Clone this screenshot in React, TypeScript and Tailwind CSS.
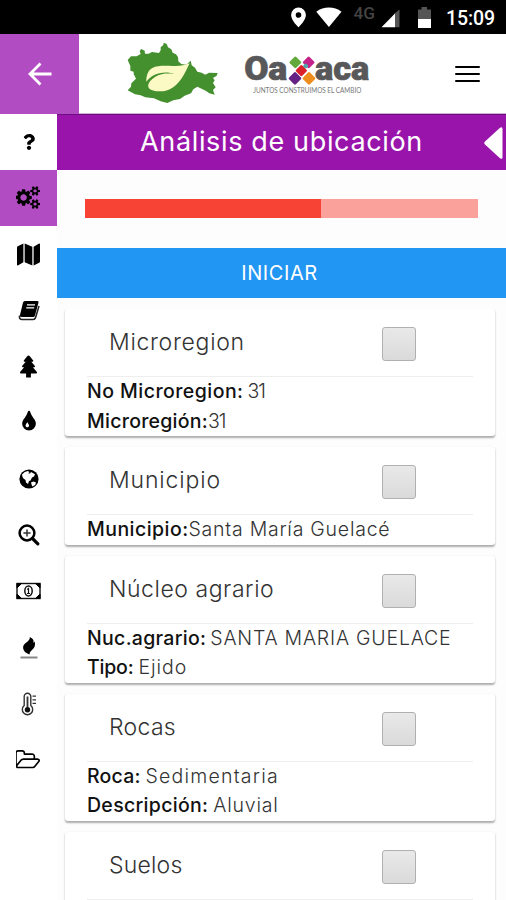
import type { ReactNode } from "react";
import { FaMap, FaQuestion } from "react-icons/fa";

const COGS =
  "M832 896q0-106-75-181t-181-75-181 75-75 181 75 181 181 75 181-75 75-181zm768 512q0-52-38-90t-90-38-90 38-38 90q0 53 37.5 90.5t90.5 37.5 90.5-37.5 37.5-90.5zm0-1024q0-52-38-90t-90-38-90 38-38 90q0 53 37.5 90.5t90.5 37.5 90.5-37.5 37.5-90.5zm-384 421v185q0 10-7 19.5t-16 10.5l-155 24q-11 35-32 76 34 48 90 115 7 11 7 20 0 12-7 19-23 30-82.5 89.5t-78.5 59.5q-11 0-21-7l-115-90q-37 19-77 31-11 108-23 155-7 24-30 24h-186q-11 0-20-7.5t-10-17.5l-23-153q-34-10-75-31l-118 89q-7 7-20 7-11 0-21-8-144-133-144-160 0-9 7-19 10-14 41-53t47-61q-23-44-35-82l-152-24q-10-1-17-9.5t-7-19.5v-185q0-10 7-19.5t16-10.5l155-24q11-35 32-76-34-48-90-115-7-11-7-20 0-12 7-20 22-30 82-89t79-59q11 0 21 7l115 90q34-18 77-32 11-108 23-154 7-24 30-24h186q11 0 20 7.5t10 17.5l23 153q34 10 75 31l118-89q8-7 20-7 11 0 21 8 144 133 144 160 0 8-7 19-12 16-42 54t-45 60q23 48 34 82l152 23q10 2 17 10.5t7 19.5zm640 533v140q0 16-149 31-12 27-30 52 51 113 51 138 0 4-4 7-122 71-124 71-8 0-46-47t-52-68q-20 2-30 2t-30-2q-14 21-52 68t-46 47q-2 0-124-71-4-3-4-7 0-25 51-138-18-25-30-52-149-15-149-31v-140q0-16 149-31 13-29 30-52-51-113-51-138 0-4 4-7 4-2 35-20t59-34 30-16q8 0 46 46.5t52 67.5q20-2 30-2t30 2q51-71 92-112l6-2q4 0 124 70 4 3 4 7 0 25-51 138 17 23 30 52 149 15 149 31zm0-1024v140q0 16-149 31-12 27-30 52 51 113 51 138 0 4-4 7-122 71-124 71-8 0-46-47t-52-68q-20 2-30 2t-30-2q-14 21-52 68t-46 47q-2 0-124-71-4-3-4-7 0-25 51-138-18-25-30-52-149-15-149-31v-140q0-16 149-31 13-29 30-52-51-113-51-138 0-4 4-7 4-2 35-20t59-34 30-16q8 0 46 46.5t52 67.5q20-2 30-2t30 2q51-71 92-112l6-2q4 0 124 70 4 3 4 7 0 25-51 138 17 23 30 52 149 15 149 31z";

const DROP =
  "M896 1152q0-36-20-69-1-1-15.5-22.5t-25.5-38-25-44-21-50.5q-4-16-21-16t-21 16q-7 23-21 50.5t-25 44-25.5 38-15.5 22.5q-20 33-20 69 0 53 37.5 90.5t90.5 37.5 90.5-37.5 37.5-90.5zm512-128q0 212-150 362t-362 150-362-150-150-362q0-145 81-275 6-9 62.5-90.5t101-151 99.5-178 83-201.5q9-30 34-47t51-17 51.5 17 33.5 47q28 93 83 201.5t99.5 178 101 151 62.5 90.5q81 127 81 275z";

const FOLDER =
  "M1717 931q0-35-53-35h-1088q-40 0-85.5 21.5t-71.5 52.5l-294 363q-18 24-18 40 0 35 53 35h1088q40 0 86-22t71-53l294-363q18-22 18-39zm-1141-163h768v-160q0-40-28-68t-68-28h-576q-40 0-68-28t-28-68v-64q0-40-28-68t-68-28h-320q-40 0-68 28t-28 68v853l256-315q44-53 116-87.5t140-34.5zm1269 163q0 62-46 120l-295 363q-43 53-116 87.5t-140 34.5h-1088q-92 0-158-66t-66-158v-960q0-92 66-158t158-66h320q92 0 158 66t66 158v32h544q92 0 158 66t66 158v160h192q54 0 99 24.5t67 70.5q15 32 15 68z";

function Glyph({ d, box, className }: { d: string; box: string; className: string }) {
  return (
    <svg viewBox={box} className={className} fill="currentColor" aria-hidden>
      <path d={d} />
    </svg>
  );
}

function BookIcon() {
  return (
    <svg viewBox="0 0 22 22" className="mb-0.5 size-[22px]" aria-hidden>
      <path d="M7 2h12.500q1.500 0 1 1.500L17 16.500q-.4 1.500-2 1.500H3.500q-2 0-1.500-2L5 3.500Q5.500 2 7 2z" fill="#000" />
      <path d="M9 5.800h8M8.200 8.800h8" stroke="#fff" strokeWidth="1.300" />
      <path d="M1.500 16.500q-.5 4 2.500 4h11q2 0 2.600-2L21 7" fill="none" stroke="#222" strokeWidth="1.500" />
    </svg>
  );
}

function TreeIcon() {
  return (
    <svg viewBox="0 0 19 23" className="h-[23px] w-[19px]" aria-hidden>
      <path
        d="M9.500.5q.8 0 1.300.8l3.400 4.200q.5 1-.6 1.200h-1.300l3.600 4.300q.6 1-.6 1.300h-1.400l4 4.600q.7 1.300-.8 1.500h-5.200V22.500H7.100v-4.100H1.900q-1.500-.2-.8-1.500l4-4.600H3.700q-1.200-.3-.6-1.300l3.600-4.300H5.400q-1.100-.2-.6-1.200l3.400-4.200q.5-.8 1.300-.8z"
        fill="#000"
      />
    </svg>
  );
}

function GlobeIcon() {
  return (
    <svg viewBox="0 0 20 20" className="size-5" aria-hidden>
      <circle cx="10" cy="10" r="9.600" fill="#000" />
      <path
        d="M3 5.500Q5.500 2.300 9 2l1.500 1.200-1.500 1 2 .3 1-1.500 4 2.300-1 2.200-2 1-1.500 3-1.500.5-1 3-2-1.500-.5-2.500-2-1.500L3.500 8z"
        fill="#fff"
      />
      <path d="M12 13.500l2.500-1 2.500 1-.8 2.500-3 1.500z" fill="#fff" />
    </svg>
  );
}

function ZoomIcon() {
  return (
    <svg viewBox="0 0 22 22" className="size-[22px]" fill="none" stroke="currentColor" aria-hidden>
      <circle cx="9" cy="9" r="7.4" strokeWidth="2.5" />
      <path d="M14.5 14.5l5.3 5.3" strokeWidth="3.2" strokeLinecap="round" />
      <path d="M9 5.4v7.200M5.400 9h7.200" strokeWidth="1.500" stroke="#333" />
    </svg>
  );
}

function MoneyIcon() {
  return (
    <svg viewBox="0 0 25 18" className="mb-0.5 h-[18px] w-[25px]" aria-hidden>
      <rect x="1" y="1.500" width="23" height="15" fill="#fff" stroke="#111" strokeWidth="1.400" />
      <path d="M1 1.500h4.500L1 6zM24 1.500h-4.500L24 6zM1 16.500h4.500L1 12zM24 16.500h-4.500L24 12z" fill="#000" stroke="#000" />
      <ellipse cx="12.500" cy="9" rx="3.700" ry="4.900" fill="#fff" stroke="#111" strokeWidth="1.500" />
      <path d="M11.200 7.400l1.300-1v5M11 11.500h3" fill="none" stroke="#111" strokeWidth="1.200" />
    </svg>
  );
}

function FireIcon() {
  return (
    <svg viewBox="0 0 20 24" className="h-6 w-5" aria-hidden>
      <path
        d="M10.500 18.500C6 16.800 3.600 14 4.200 10.500 4.900 6.800 11.400 5.400 10.800 1c3.200 1.400 4.300 3.400 3.600 5.700.6-.1 1-.5 1.300-1.100 1 4.500-.6 6.600-2.700 8.400-1.400 1.200-2.500 2.500-2.500 4.500z"
        fill="#000"
      />
      <path d="M1.500 21.500h17" stroke="#888" strokeWidth="2" />
    </svg>
  );
}

function ThermometerIcon() {
  return (
    <svg viewBox="0 0 18 24" className="h-6 w-[18px]" fill="none" stroke="#333" aria-hidden>
      <path d="M4.2 13.500V4.500a3.300 3.300 0 0 1 6.600 0v9a5.200 5.200 0 1 1-6.600 0z" strokeWidth="1.4" />
      <path d="M7.500 4.500v13" strokeWidth="1.800" />
      <circle cx="7.500" cy="17.800" r="2.700" fill="#111" stroke="none" />
      <path d="M12.500 4.200H16M12.500 7.800H16M12.500 11.400H16" strokeWidth="1.300" />
    </svg>
  );
}

const TOOLS: { name: string; icon: ReactNode }[] = [
  { name: "Ayuda", icon: <FaQuestion className="size-4" /> },
  { name: "Análisis", icon: <Glyph d={COGS} box="0 0 1920 1792" className="mb-0.5 h-[23px] w-[25px]" /> },
  { name: "Mapa", icon: <FaMap className="h-[25px] w-[23px]" preserveAspectRatio="none" /> },
  { name: "Catálogo", icon: <BookIcon /> },
  { name: "Vegetación", icon: <TreeIcon /> },
  { name: "Agua", icon: <Glyph d={DROP} box="0 0 1792 1792" className="mb-0.5 size-6" /> },
  { name: "Región", icon: <GlobeIcon /> },
  { name: "Buscar", icon: <ZoomIcon /> },
  { name: "Economía", icon: <MoneyIcon /> },
  { name: "Incendios", icon: <FireIcon /> },
  { name: "Clima", icon: <ThermometerIcon /> },
  { name: "Archivos", icon: <Glyph d={FOLDER} box="0 0 1920 1792" className="h-[24px] w-[25px]" /> },
];

type Field = { label: string; value: string; labelClass: string; valueClass: string };
type Section = { title: string; titleClass: string; fields: Field[] };

const SECTIONS: Section[] = [
  {
    title: "Microregion",
    titleClass: "tracking-[0.7px]",
    fields: [
      { label: "No Microregion:", value: "31", labelClass: "tracking-[0.45px]", valueClass: "ml-1 tracking-[-1px]" },
      { label: "Microregión:", value: "31", labelClass: "tracking-[0.25px]", valueClass: "tracking-[-1px]" },
    ],
  },
  {
    title: "Municipio",
    titleClass: "tracking-[0.85px]",
    fields: [
      { label: "Municipio:", value: "Santa María Guelacé", labelClass: "tracking-[0.45px]", valueClass: "tracking-[0.75px]" },
    ],
  },
  {
    title: "Núcleo agrario",
    titleClass: "tracking-[0.55px]",
    fields: [
      { label: "Nuc.agrario:", value: "SANTA MARIA GUELACE", labelClass: "tracking-[0.3px]", valueClass: "ml-1 tracking-[0.78px]" },
      { label: "Tipo:", value: "Ejido", labelClass: "tracking-[-0.2px]", valueClass: "ml-[5px] tracking-[1px]" },
    ],
  },
  {
    title: "Rocas",
    titleClass: "tracking-[0.3px]",
    fields: [
      { label: "Roca:", value: "Sedimentaria", labelClass: "tracking-[0.2px]", valueClass: "ml-[5px] tracking-[1.2px]" },
      { label: "Descripción:", value: "Aluvial", labelClass: "tracking-[0.3px]", valueClass: "ml-[5px] tracking-[0.8px]" },
    ],
  },
  {
    title: "Suelos",
    titleClass: "tracking-[0.2px]",
    fields: [],
  },
];

function StatusBar() {
  return (
    <div className="flex h-[34px] shrink-0 items-center bg-black pl-[290px] text-white">
      <svg viewBox="0 0 156 34" className="h-[34px] w-[156px]" aria-hidden>
        <path
          fillRule="evenodd"
          d="M8.5 7.5a7.4 7.4 0 0 0-7.4 7.4c0 5.3 7.4 12.3 7.4 12.3s7.4-7 7.4-12.3a7.4 7.4 0 0 0-7.4-7.4zm0 4.7a2.8 2.8 0 1 1 0 5.6 2.8 2.8 0 0 1 0-5.600z"
          fill="#fff"
        />
        <path d="M26.3 11.7c7.4-5.6 17.8-5.6 25.2 0L38.9 27z" fill="#fff" />
        <text x="63.5" y="19.2" className="font-['Roboto'] text-[17px] font-medium" fill="#444" textLength="21.5" lengthAdjust="spacingAndGlyphs">
          4G
        </text>
        <path d="M104.500 13.500L109.500 9.500V27.300h-5z" fill="#555" />
        <path d="M91.5 27.3L105 13.500v13.800z" fill="#fff" />
        <path d="M131.500 7h5.500v2.500h4V19h-13V9.500h3.500z" fill="#555" />
        <path d="M128 19h13v9h-13z" fill="#fff" />
      </svg>
      <span className="mt-1 font-['Roboto'] text-[19.5px] leading-none font-medium tracking-[-0.1px]">15:09</span>
    </div>
  );
}

function StateMap() {
  return (
    <svg viewBox="0 0 318 228" className="ml-[41px] h-[76px] w-[106px] shrink-0" aria-hidden>
      <path
        d="M23 72L33 61 50 61 62 54 59 45 64 39 74 44 75 53 86 53 96 48 117 51 122 43 122 34 130 27 131 20 140 24 144 34 154 40 158 50 168 55 174 63 175 76 184 84 199 86 212 74 215 88 225 95 232 107 245 110 256 116 267 110 293 111 290 119 279 126 284 133 279 141 287 154 279 162 284 176 268 172 257 164 240 156 232 152 220 160 213 172 194 179 180 189 160 193 142 201 122 196 102 187 76 184 62 178 45 175 23 163 33 152 34 142 48 128 41 114 41 107 31 104 31 90z"
        fill="#45902e"
      />
      <path
        d="M79 137c-1-17 5-34 18-41 16-8 38-7 60-6 22 1 35-1 52-8-9 18-15 33-25 46-16 23-38 38-62 38-17 0-31-3-36-11-3-7-1-12 4-19 8-10 22-19 38-22 13-2 24-1 34 0-12-5-28-6-44-2-18 4-31 14-39 25z"
        fill="#fbf9c4"
      />
    </svg>
  );
}

const TILES = [
  { x: 172, y: 43, side: 27, fill: "#62a83a" },
  { x: 212, y: 43, side: 27, fill: "#c4218a" },
  { x: 203, y: 54, side: 13, fill: "#4ba7ad" },
  { x: 171, y: 91, side: 29, fill: "#642384" },
  { x: 213, y: 91, side: 29, fill: "#ee8c1e" },
  { x: 190, y: 68, side: 26, fill: "#d9202b" },
];

function OaxacaLogo() {
  return (
    <svg viewBox="0 0 420 156" className="ml-3 h-[52px] w-[140px] shrink-0 overflow-visible" aria-label="Oaxaca">
      <g className="font-['Roboto'] font-black" fill="#58585a" stroke="#58585a" strokeWidth="2" strokeLinejoin="round">
        <text x="19" y="95" fontSize="101" textLength="73" lengthAdjust="spacingAndGlyphs">O</text>
        <text x="91" y="95" fontSize="98" textLength="57" lengthAdjust="spacingAndGlyphs">a</text>
        <text x="231" y="95" fontSize="98" textLength="163" lengthAdjust="spacingAndGlyphs">aca</text>
      </g>
      {TILES.map((tile) => (
        <rect
          key={tile.fill}
          x={tile.x - tile.side / 2}
          y={tile.y - tile.side / 2}
          width={tile.side}
          height={tile.side}
          rx="4"
          transform={`rotate(45 ${tile.x} ${tile.y})`}
          fill={tile.fill}
        />
      ))}
      <text x="46" y="134" fontSize="20" className="font-['Lato']" fill="#777" textLength="324" lengthAdjust="spacingAndGlyphs">
        JUNTOS CONSTRUIMOS EL CAMBIO
      </text>
    </svg>
  );
}

function Header() {
  return (
    <header className="flex h-20 shrink-0 items-center border-b border-[#c9b3cf] bg-white">
      <button type="button" aria-label="Volver" className="flex h-20 w-[79px] items-center justify-center bg-[#b24cc2]">
        <svg viewBox="0 0 24 24" className="size-6" fill="none" stroke="#fff" strokeWidth="2.800" aria-hidden>
          <path d="M12.500 1.500L2 12l10.500 10.500M2 12h21.500" />
        </svg>
      </button>
      <StateMap />
      <OaxacaLogo />
      <button type="button" aria-label="Menú" className="ml-auto flex w-[51px] flex-col gap-[5px] pr-[26px] *:h-0.5 *:rounded-full *:bg-black">
        <span />
        <span />
        <span />
      </button>
    </header>
  );
}

function SectionCard({ section }: { section: Section }) {
  return (
    <section className="h-fit shrink-0 rounded-[3px] bg-white shadow-[0_1.500px_2px_rgba(0,0,0,0.32)]">
      <div className="flex h-[67px] items-center pl-11">
        <h2 className={`w-[273px] text-[23px] font-light text-[#333] ${section.titleClass}`}>{section.title}</h2>
        <span className="mt-[3px] size-[34px] rounded-[3px] border-[1.500px] border-[#b0b0b0] bg-linear-to-b from-[#e9e9e9] to-[#dadada]" />
      </div>
      <div className="mx-[22px] min-h-7 border-t border-[#eee]">
        {section.fields.map((field) => (
          <p key={field.label} className="flex h-[29.500px] items-center text-[19.5px] leading-none whitespace-nowrap">
            <span className={`font-medium text-[#111] ${field.labelClass}`}>{field.label}</span>
            <span className={`font-light text-[#333] ${field.valueClass}`}>{field.value}</span>
          </p>
        ))}
      </div>
    </section>
  );
}

export default function App() {
  return (
    <div className="flex h-[900px] w-[506px] flex-col overflow-hidden bg-white font-['Inter',sans-serif] text-black">
      <StatusBar />
      <Header />
      <div className="flex min-h-0 flex-1">
        <nav className="flex w-[57px] shrink-0 flex-col bg-white">
          {TOOLS.map((tool, i) => (
            <button
              key={tool.name}
              type="button"
              aria-label={tool.name}
              className={`flex h-[56.200px] shrink-0 items-center justify-center ${i === 1 ? "bg-[#b24cc2]" : ""}`}
            >
              {tool.icon}
            </button>
          ))}
        </nav>

        <main className="flex min-w-0 flex-1 flex-col bg-[#fdfdfd]">
          <div className="flex h-14 shrink-0 items-center justify-between border-t border-[#6d0f80] bg-[#9914ab] pr-[3px] pl-[83px] text-white">
            <h1 className="text-[27px] font-normal tracking-[0.650px] whitespace-nowrap">Análisis de ubicación</h1>
            <svg viewBox="0 0 19 32" className="h-8 w-[19px]" fill="#fff" aria-hidden>
              <path d="M1 14.500L16 .8q2.500-1.500 2.500 1.500v28q0 2.500-2.500 1L1 17.500q-1.500-1.500 0-3z" />
            </svg>
          </div>

          <div className="mx-7 mt-[29px] h-[19px] shrink-0 bg-[#fba19b]">
            <div className="h-full w-3/5 bg-[#f64335]" />
          </div>

          <button type="button" className="mt-[30px] h-[50px] shrink-0 bg-[#2196f3] pr-1 text-xl tracking-[0.600px] text-white">
            INICIAR
          </button>

          <div className="mt-[11px] flex min-h-0 flex-1 flex-col gap-[11px] overflow-hidden pr-[11px] pl-2">
            {SECTIONS.map((section) => (
              <SectionCard key={section.title} section={section} />
            ))}
          </div>
        </main>
      </div>
    </div>
  );
}
